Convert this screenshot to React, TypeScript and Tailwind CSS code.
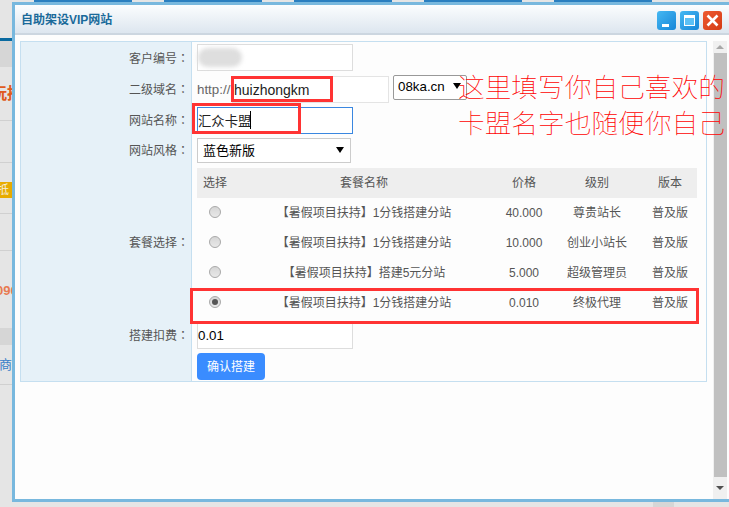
import React from "react";

const plans = [
  { name: "【暑假项目扶持】1分钱搭建分站", price: "40.000", level: "尊贵站长", checked: false },
  { name: "【暑假项目扶持】1分钱搭建分站", price: "10.000", level: "创业小站长", checked: false },
  { name: "【暑假项目扶持】搭建5元分站", price: "5.000", level: "超级管理员", checked: false },
  { name: "【暑假项目扶持】1分钱搭建分站", price: "0.010", level: "终极代理", checked: true },
];

function Colon() {
  return <span className="font-[family-name:'Noto_Sans_CJK_TC',sans-serif]">：</span>;
}

function Row({ label, heightClass, children }: { label?: string; heightClass: string; children: React.ReactNode }) {
  return (
    <div className={`flex ${heightClass}`}>
      <div className="flex w-[171px] shrink-0 items-center justify-end border-r border-[#c5dff0] bg-[#e6f1f8] pr-[2px] text-[12px] text-[#555]">
        {label ? (
          <span>
            {label}
            <Colon />
          </span>
        ) : null}
      </div>
      <div className="flex min-w-0 flex-1 items-center pl-[5px]">{children}</div>
    </div>
  );
}

function Arrow({ className }: { className: string }) {
  return (
    <svg viewBox="0 0 8 8" className={className}>
      <path d="M0 1h8L4 7z" fill="#000" />
    </svg>
  );
}

function WinButton({ className, children }: { className: string; children: React.ReactNode }) {
  return <div className={`flex h-[19px] w-[19px] items-center justify-center rounded-[3px] ${className}`}>{children}</div>;
}

function Radio({ checked }: { checked: boolean }) {
  return (
    <div className="ml-[12px] flex h-[12px] w-[12px] -translate-y-px items-center justify-center rounded-full border border-[#aaa] bg-gradient-to-b from-[#d6d6d6] to-[#e8e8e8]">
      {checked ? <div className="h-[6px] w-[6px] rounded-full bg-[#555]" /> : null}
    </div>
  );
}

function LeftStrip() {
  return (
    <div className="flex w-[12px] shrink-0 flex-col overflow-hidden bg-[#e5e5e5]">
      <div className="h-[36px] shrink-0" />
      <div className="h-[3px] shrink-0 bg-[#0a6aa0]" />
      <div className="h-[26px] shrink-0 bg-[#d6d6d6]" />
      <div className="flex h-[54px] shrink-0 items-center whitespace-nowrap border-b border-[#d0d0d0] text-[16px] font-bold text-[#e05a20]">
        <span className="-ml-[9px]">玩推广</span>
      </div>
      <div className="h-[42px] shrink-0 border-b border-[#d0d0d0]" />
      <div className="h-[19px] shrink-0" />
      <div className="flex h-[16px] shrink-0 items-center whitespace-nowrap bg-[#e8ab00] text-[12px] text-[#f4f0e0]">
        <span className="-ml-[3px]">抵</span>
      </div>
      <div className="h-[16px] shrink-0 border-b border-[#d0d0d0]" />
      <div className="h-[37px] shrink-0 border-b border-[#d0d0d0]" />
      <div className="flex h-[77px] shrink-0 items-center whitespace-nowrap pt-[2px] text-[13px] font-bold text-[#e87a50]">
        <span className="-ml-[4px]">096</span>
      </div>
      <div className="h-[17px] shrink-0 bg-[#d6d6d6]" />
      <div className="flex h-[40px] shrink-0 items-center whitespace-nowrap border-b border-[#d0d0d0] text-[13px] text-[#3a80c8]">
        <span className="-ml-[1px]">商</span>
      </div>
    </div>
  );
}

export default function App() {
  const input = "h-[27px] w-[156px] border border-[#ddd] bg-white px-0 text-[13.33px] text-black outline-none";
  return (
    <div className="relative flex h-[507px] w-[729px] flex-col overflow-hidden bg-[#e5e5e5] font-[family-name:'Liberation_Sans','Noto_Sans_CJK_SC',sans-serif]">
      <div className="flex h-[2px] shrink-0">
        <div className="w-[34px]" />
        <div className="w-[98px] bg-[#2a7fc0]" />
        <div className="w-[32px]" />
        <div className="w-[98px] bg-[#2a7fc0]" />
        <div className="w-[32px]" />
        <div className="w-[98px] bg-[#2a7fc0]" />
        <div className="w-[32px]" />
        <div className="w-[98px] bg-[#2a7fc0]" />
        <div className="w-[32px]" />
        <div className="w-[98px] bg-[#2a7fc0]" />
      </div>
      <div className="flex h-[500px] shrink-0">
        <LeftStrip />
        <div className="flex min-w-0 flex-1 flex-col border-y-[3px] border-l-[3px] border-[#78b8de] bg-[#fdfdfd]">
          <div className="flex h-[30px] shrink-0 items-center justify-between border-b-2 border-[#ccd6e0] bg-gradient-to-b from-[#fbfdfe] to-[#dde6ef] pl-[6px] pr-[7px] pt-[2px]">
            <span className="text-[12px] font-bold text-[#1a6a9a]">自助架设VIP网站</span>
            <div className="flex gap-[4px]">
              <WinButton className="items-end bg-gradient-to-br from-[#45b8f2] to-[#1586d8]">
                <div className="mb-[3px] h-[3px] w-[7px] -translate-x-[1px] bg-white" />
              </WinButton>
              <WinButton className="bg-gradient-to-br from-[#45b8f2] to-[#1586d8]">
                <div className="h-[11px] w-[11px] border border-t-[3px] border-white bg-[#5cc0f5]" />
              </WinButton>
              <WinButton className="bg-gradient-to-br from-[#ee5a30] to-[#d43a12]">
                <svg viewBox="0 0 19 19" className="h-[19px] w-[19px]">
                  <path d="M4.5 4.5l10 10M14.5 4.5l-10 10" stroke="#fff" strokeWidth="2.6" />
                </svg>
              </WinButton>
            </div>
          </div>
          <div className="flex min-h-0 flex-1 pt-[6px]">
            <div className="w-[698px] shrink-0 pl-[5px]">
              <div className="w-[687px] border border-[#c5dff0]">
                <Row label="客户编号" heightClass="h-[32px]">
                  <div className="relative mb-[1px] flex items-center">
                    <input readOnly className={input} />
                    <div className="absolute left-[1px] top-[4px] h-[19px] w-[44px] rounded-full bg-[#dedede] blur-[2px]" />
                  </div>
                </Row>
                <Row label="二级域名" heightClass="h-[31px]">
                  <span className="w-[35px] text-[13.33px] text-[#666]">http://</span>
                  <input readOnly defaultValue="huizhongkm" className="h-[27px] w-[157px] border border-[#e4e4e4] bg-white pl-[1px] text-[14px] text-[#222] outline-none" />
                  <div className="relative mb-[5px] ml-[4px]">
                    <select className="h-[25px] w-[74px] appearance-none rounded-[2px] border border-[#999] bg-white pl-[4px] text-[13.33px] text-black outline-none">
                      <option>08ka.cn</option>
                    </select>
                    <Arrow className="absolute right-[6px] top-[8px] h-[8px] w-[8px]" />
                  </div>
                </Row>
                <Row label="网站名称" heightClass="h-[31px]">
                  <div className="relative flex">
                    <input readOnly defaultValue="汇众卡盟" className="h-[27px] w-[156px] border border-[#3a87e0] bg-white pl-0 text-[13.33px] text-[#222] outline-none" />
                    <div className="absolute left-[53px] top-[4px] h-[18px] w-px bg-black" />
                  </div>
                </Row>
                <Row label="网站风格" heightClass="h-[29px]">
                  <div className="relative">
                    <select className="h-[25px] w-[154px] appearance-none border border-[#ccc] bg-white pl-[5px] text-[13px] text-black outline-none">
                      <option>蓝色新版</option>
                    </select>
                    <Arrow className="absolute right-[7px] top-[8px] h-[8px] w-[8px]" />
                  </div>
                </Row>
                <Row label="套餐选择" heightClass="h-[155px]">
                  <table className="mt-[1px] w-[500px] table-fixed border-collapse text-[12px] text-[#555]">
                    <colgroup>
                      <col className="w-[34px]" />
                      <col className="w-[266px]" />
                      <col className="w-[54px]" />
                      <col className="w-[92px]" />
                      <col className="w-[54px]" />
                    </colgroup>
                    <thead>
                      <tr className="h-[30px] bg-[#eee] font-normal">
                        <th className="pl-[6px] text-left font-normal">选择</th>
                        <th className="font-normal">套餐名称</th>
                        <th className="font-normal">价格</th>
                        <th className="font-normal">级别</th>
                        <th className="font-normal">版本</th>
                      </tr>
                    </thead>
                    <tbody>
                      {plans.map((p, i) => (
                        <tr key={i} className="h-[30px] text-center">
                          <td>
                            <Radio checked={p.checked} />
                          </td>
                          <td>{p.name}</td>
                          <td>{p.price}</td>
                          <td>{p.level}</td>
                          <td>普及版</td>
                        </tr>
                      ))}
                    </tbody>
                  </table>
                </Row>
                <Row label="搭建扣费" heightClass="h-[31px]">
                  <input readOnly defaultValue="0.01" className={input} />
                </Row>
                <Row heightClass="h-[30px]">
                  <button className="mt-[1px] h-[27px] w-[68px] rounded-[4px] bg-[#3a8cff] text-[12px] text-white">确认搭建</button>
                </Row>
              </div>
            </div>
            <div className="flex w-[14px] shrink-0 flex-col bg-[#f0f0f0]">
              <div className="flex h-[12px] shrink-0 items-center justify-center">
                <svg viewBox="0 0 8 4" className="h-[4px] w-[8px]">
                  <path d="M4 0l4 4H0z" fill="#a8a8a8" />
                </svg>
              </div>
              <div className="ml-px h-[424px] shrink-0 bg-[#c0c0c0]" />
              <div className="flex flex-1 items-center justify-center">
                <svg viewBox="0 0 8 4" className="h-[4px] w-[8px]">
                  <path d="M0 0h8L4 4z" fill="#505050" />
                </svg>
              </div>
            </div>
          </div>
        </div>
      </div>
      <div className="flex h-[5px] shrink-0">
        <div className="w-[653px]" />
        <div className="w-[21px] bg-[#d6d6d6]" />
      </div>

      <div className="absolute left-[231px] top-[76px] h-[26px] w-[102px] border-[3px] border-[#f33]" />
      <div className="absolute left-[192px] top-[103px] h-[31px] w-[109px] border-[3px] border-[#f33]" />
      <div className="absolute left-[190px] top-[288px] h-[36px] w-[509px] border-[3px] border-[#f33]" />
      <div className="absolute left-[458px] top-[70px] whitespace-nowrap text-[26.7px] font-thin leading-[36px] text-[#f00]">
        <div>这里填写你自己喜欢的</div>
        <div>卡盟名字也随便你自己</div>
      </div>
    </div>
  );
}
